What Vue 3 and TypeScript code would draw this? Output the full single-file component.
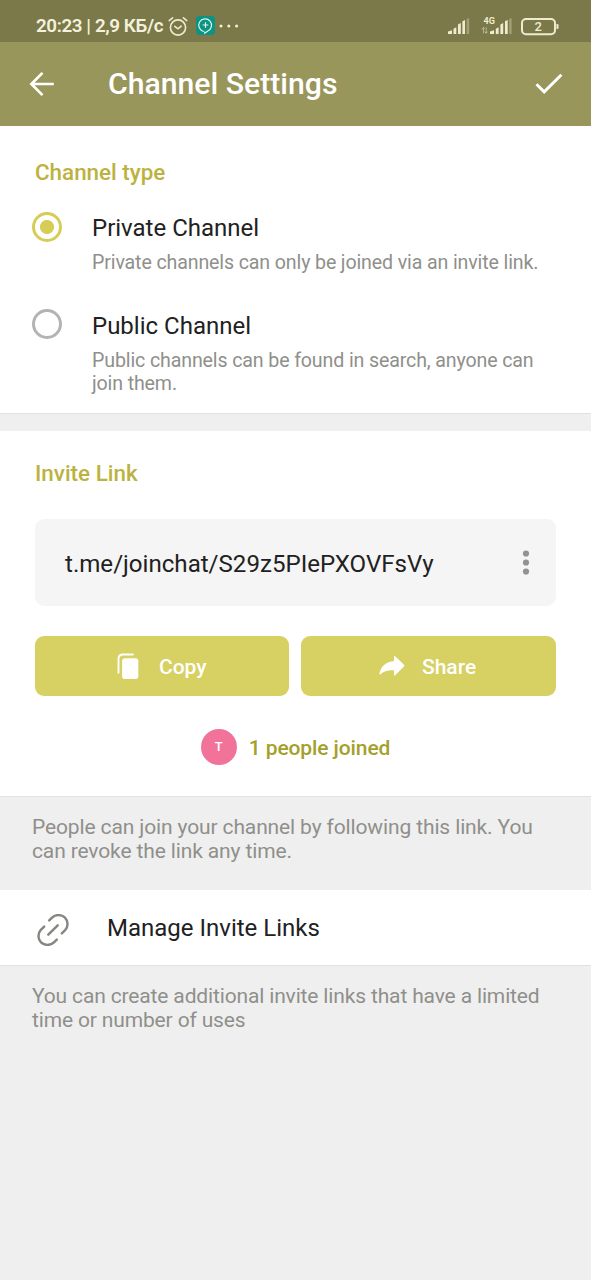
<script setup lang="ts">
import { ref } from 'vue'

interface ChannelOption {
  id: string
  title: string
  description: string
}

const options: ChannelOption[] = [
  { id: 'private', title: 'Private Channel', description: 'Private channels can only be joined via an invite link.' },
  { id: 'public', title: 'Public Channel', description: 'Public channels can be found in search, anyone can join them.' },
]
const selected = ref('private')
</script>

<template>
  <div class="screen">
    <div class="status">
      <span class="clock">20:23 | 2,9 КБ/с</span>
      <svg class="alarm" width="20" height="22" viewBox="0 0 20 22" fill="none" stroke="#eeecce" stroke-width="1.6" stroke-linecap="round">
        <circle cx="10" cy="11.5" r="7.6" />
        <path d="M6.8 10.3 10 12.8l3.2-2.6M1.2 4.6 4.6 1.8M15.4 1.8l3.4 2.8" />
      </svg>
      <svg class="app" width="19" height="19" viewBox="0 0 19 19">
        <rect width="19" height="19" rx="3.5" fill="#0b9384" />
        <path d="M7.9 15.5A6.4 6.4 0 1 1 11.4 15.2L8.8 17.2 8.7 15.6M9.5 6.2v5.6M6.7 9h5.6" fill="none" stroke="#e4f4ec" stroke-width="1.2" />
      </svg>
      <svg class="dots" width="20" height="4" viewBox="0 0 20 4" fill="#f4f2dc">
        <circle cx="2" cy="2" r="1.5" /><circle cx="9.8" cy="2" r="1.5" /><circle cx="17.6" cy="2" r="1.5" />
      </svg>
      <svg class="indicators" width="114" height="24" viewBox="0 0 114 24" fill="#eeecce">
        <path d="M2 18v-2.400l4-1.400V18zM7.500 18v-5.200l2.800-1.500V18zM12 18V8.500l2.800-1.500v11zM16.400 18V5.200L19 4v14z" />
        <path d="M20.600 18V3l2.600-1v16z" opacity=".35" />
        <text x="37.6" y="7.7" class="net">4G</text>
        <path d="M37.500 17.500v-6M35.800 13.500l1.700-2 1 1.300M40.200 11v6M38.800 15.500l1.400 1.800 1.500-1.800" fill="none" stroke="#eeecce" opacity=".5" />
        <path d="M44 18v-2.400l4-1.400V18zM49.800 18v-5.200l2.800-1.500V18zM54.400 18V8.500l2.800-1.500v11zM59 18V5.200L61.700 4v14z" />
        <path d="M63.200 18V3l2.400-1v16z" opacity=".35" />
        <rect x="76" y="3" width="33" height="15.200" rx="4" fill="none" stroke="#eeecce" stroke-width="2" />
        <path d="M110.500 8h1q1 0 1 1v3q0 1-1 1h-1z" />
        <text x="92.200" y="15" text-anchor="middle" class="level">2</text>
      </svg>
    </div>

    <header class="bar">
      <svg class="back" width="26" height="26" viewBox="0 0 26 26" fill="none" stroke="#fff" stroke-width="2.7">
        <path d="M24.800 13H3.400M13.500 1.900 2.400 13l11.100 11.100" />
      </svg>
      <h1>Channel Settings</h1>
      <svg class="check" width="28" height="22" viewBox="0 0 28 22" fill="none" stroke="#fff" stroke-width="2.9">
        <path d="m1.500 11.200 7.700 7.700L26.400 1.700" />
      </svg>
    </header>

    <section class="card type">
      <h2>Channel type</h2>
      <div v-for="o in options" :key="o.id" class="option" @click="selected = o.id">
        <span class="radio" :class="{ on: selected === o.id }"></span>
        <div class="copytext">
          <div class="name">{{ o.title }}</div>
          <div class="desc">{{ o.description }}</div>
        </div>
      </div>
    </section>
    <div class="gap"></div>

    <section class="card invite">
      <h2>Invite Link</h2>
      <div class="link">
        <span>t.me/joinchat/S29z5PIePXOVFsVy</span>
        <svg width="8" height="26" viewBox="0 0 8 26" fill="#929292">
          <circle cx="4" cy="3.500" r="3.100" /><circle cx="4" cy="12.500" r="3.100" /><circle cx="4" cy="21.500" r="3.100" />
        </svg>
      </div>
      <div class="buttons">
        <button class="copy">
          <svg width="22" height="27" viewBox="0 0 22 27" fill="none">
            <rect x="5.100" y="5.200" width="16.200" height="20.800" rx="2.800" fill="#fff" />
            <path d="M1.500 19.800V6q0-4.500 4.500-4.500h10" stroke="#fff" stroke-width="1.900" stroke-linecap="round" />
          </svg>
          <span>Copy</span>
        </button>
        <button class="share">
          <svg width="26" height="22" viewBox="0 0 26 22" fill="#fff">
            <path d="M15 1.600Q15 .2 16.200 1.200L25 9.800q.8.8 0 1.600l-8.800 8.800q-1.200 1-1.200-.4v-4.500C8.500 15.200 4.600 16.400 1.600 19.200 .8 19.900.2 19.500.4 18.500 2 11.200 7.200 6.700 15 6z" />
          </svg>
          <span>Share</span>
        </button>
      </div>
      <div class="joined">
        <span class="avatar">T</span>
        <span class="count">1 people joined</span>
      </div>
    </section>
    <p class="info first">People can join your channel by following this link. You can revoke the link any time.</p>

    <div class="card manage">
      <svg width="32" height="32" viewBox="0 0 34 34" fill="none" stroke="#868682" stroke-width="2.600" stroke-linecap="round">
        <path d="M12 22 22 12" />
        <path d="M13 6.800l3-3C19.500.3 26.200.3 29.700 3.800s3.700 9.700.2 13.300l-3.500 3.500" />
        <path d="M21 27.200l-3 3C14.500 33.700 7.800 33.700 4.300 30.200s-3.700-9.700-.2-13.300l3.500-3.500" />
      </svg>
      <span>Manage Invite Links</span>
    </div>
    <p class="info second">You can create additional invite links that have a limited time or number of uses</p>
  </div>
</template>

<style>
body {
  background: #efefef;
}
</style>

<style scoped>
.screen {
  width: 591px;
  height: 1280px;
  overflow: hidden;
  background: #efefef;
  font-family: Roboto, "Noto Sans", sans-serif;
  color: #212121;
}
h1, h2, p {
  margin: 0;
}
svg {
  display: block;
  flex: none;
}
span, h1, h2 {
  white-space: nowrap;
}
.status {
  height: 42px;
  box-sizing: border-box;
  padding: 11px 31px 0 36px;
  display: flex;
  align-items: flex-start;
  background: #7b7949;
}
.clock {
  width: 128px;
  font-size: 18.8px;
  font-weight: 600;
  letter-spacing: -0.4px;
  line-height: 31px;
  color: #f4f2dc;
}
.alarm {
  margin: 5px 0 0 4px;
}
.app {
  margin: 5px 0 0 8px;
}
.dots {
  margin: 13px 0 0 4px;
}
.indicators {
  margin: 5px 0 0 auto;
}
.net {
  font-size: 9px;
  font-weight: 700;
}
.level {
  font-size: 13px;
  font-weight: 500;
}
.bar {
  height: 84px;
  display: flex;
  align-items: center;
  padding: 0 28px 0 29px;
  background: #99965b;
  color: #fff;
}
h1 {
  margin: -2px 0 0 53px;
  font-size: 30.2px;
  font-weight: 500;
}
.check {
  margin-left: auto;
}
.card {
  background: #fff;
}
h2 {
  font-size: 22.4px;
  line-height: 26px;
  font-weight: 500;
  color: #bcb241;
}
.type {
  height: 287px;
  box-sizing: border-box;
  padding: 33px 35px 0;
}
.option {
  display: flex;
  margin: 29px -4px 0;
}
.option + .option {
  margin-top: 38px;
}
.radio {
  flex: none;
  width: 30px;
  height: 30px;
  margin: -2px -0.5px 0 0.5px;
  box-sizing: border-box;
  border: 3px solid #b3b3b3;
  border-radius: 50%;
}
.radio.on {
  border-color: #d5cd55;
  background: radial-gradient(circle, #d5cd55 6.6px, transparent 7.4px);
}
.option + .option .radio {
  margin-top: -3px;
}
.copytext {
  margin-left: 31px;
}
.name {
  font-size: 24px;
  line-height: 28px;
}
.desc {
  margin-top: 9px;
  font-size: 19.6px;
  line-height: 23px;
  letter-spacing: -0.13px;
  color: #8f8f8b;
}
.gap {
  height: 18px;
  box-sizing: border-box;
  border-top: 1px solid #e2e2e2;
}
.invite {
  height: 365px;
  box-sizing: border-box;
  padding: 29px 35px 0;
}
.link {
  height: 87px;
  margin-top: 33px;
  box-sizing: border-box;
  padding: 0 26px 0 30px;
  display: flex;
  align-items: center;
  justify-content: space-between;
  border-radius: 9px;
  background: #f5f5f5;
  font-size: 24.1px;
}
.link span {
  padding-top: 2px;
}
.buttons {
  margin-top: 30px;
  display: grid;
  grid-template-columns: 254.3px 1fr;
  gap: 12px;
}
button {
  height: 60px;
  border: 0;
  padding: 0;
  display: flex;
  align-items: center;
  border-radius: 9px;
  background: #d7d062;
  color: #fff;
  font: 500 21px Roboto, sans-serif;
}
button span {
  padding-top: 2px;
}
.copy svg {
  margin-left: 82px;
}
.copy span {
  margin-left: 20px;
}
.share svg {
  margin-left: 77.7px;
}
.share span {
  margin-left: 17px;
}
.joined {
  margin-top: 33px;
  height: 36px;
  display: flex;
  align-items: center;
  justify-content: center;
  gap: 12px;
}
.avatar {
  width: 36px;
  height: 36px;
  border-radius: 50%;
  background: #f27399;
  color: #fff;
  font-size: 13px;
  font-weight: 500;
  line-height: 36px;
  text-align: center;
}
.count {
  padding-top: 2px;
  font-size: 21px;
  font-weight: 500;
  letter-spacing: -0.1px;
  color: #a5a02b;
}
.info {
  box-sizing: border-box;
  padding: 17.500px 32px 0;
  border-top: 1px solid #e2e2e2;
  font-size: 21px;
  line-height: 24.5px;
  letter-spacing: -0.13px;
  color: #8f8f8b;
}
.first {
  height: 94px;
}
.second {
  letter-spacing: -0.15px;
}
.manage {
  height: 75px;
  display: flex;
  align-items: center;
  padding-left: 37px;
  font-size: 24px;
}
.manage svg {
  margin-top: 4px;
}
.manage span {
  margin-left: 38px;
}
</style>
